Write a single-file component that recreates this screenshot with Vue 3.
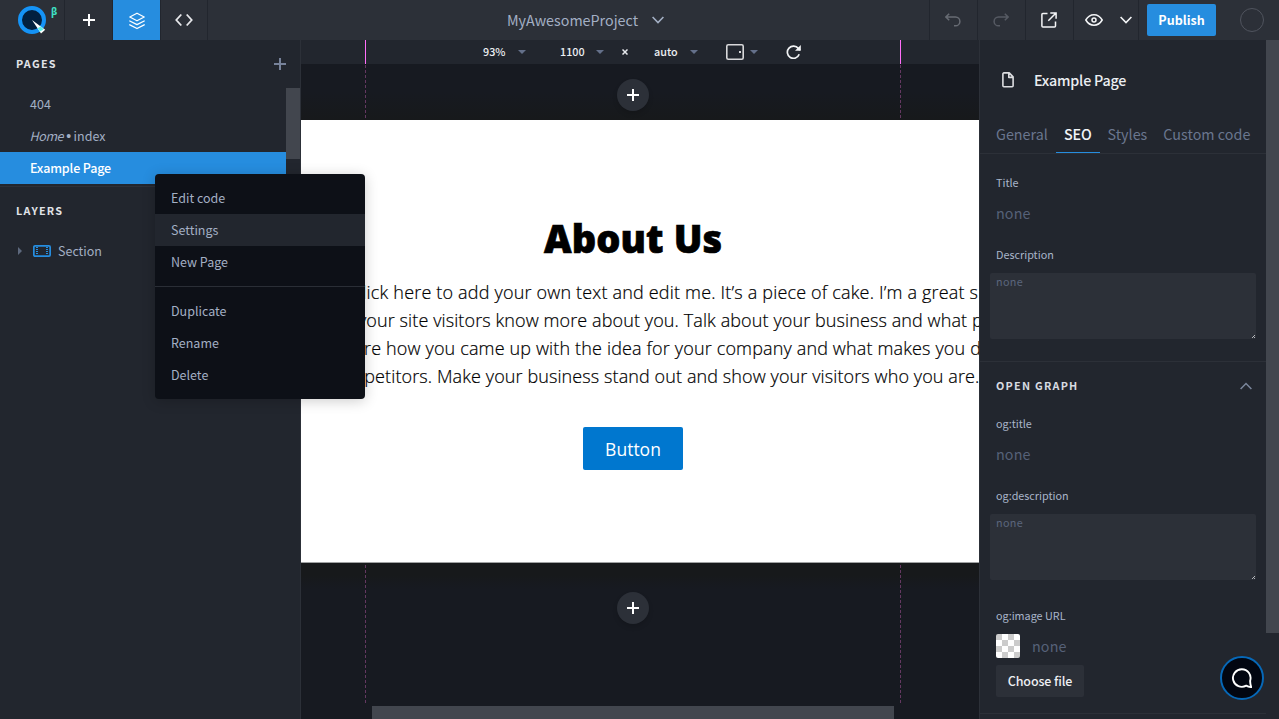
<script setup>
const pages = [
  { name: '404' },
  { name: 'index', home: true },
  { name: 'Example Page', active: true },
]
const menu = [
  ['Edit code', 'Settings', 'New Page'],
  ['Duplicate', 'Rename', 'Delete'],
]
const tabs = ['General', 'SEO', 'Styles', 'Custom code']
</script>

<template>
  <div class="app">
    <header class="topbar">
      <div class="cell logo">
        <svg width="64" height="40" viewBox="0 0 64 40">
          <circle cx="32" cy="20" r="12" fill="#02203f" stroke="#1593f6" stroke-width="4" />
          <path d="M32 20 45.200 29.800 41 33.600Z" fill="#fff" />
          <path d="M37.800 28 41 26.600 43.600 29.400 39.900 31.400Z" fill="#5ff0e8" />
        </svg>
        <span class="beta">β</span>
      </div>
      <div class="cell w48">
        <svg width="12" height="12" viewBox="0 0 12 12"><path d="M6 0v12M0 6h12" stroke="#fff" stroke-width="2" /></svg>
      </div>
      <div class="cell w48 on">
        <svg width="18" height="18" viewBox="0 0 18 18" fill="none" stroke="#fff" stroke-width="1.3" stroke-linejoin="round" stroke-linecap="round"><path d="M9 1.2 16.2 5 9 8.8 1.8 5ZM1.8 9 9 12.7 16.2 9M1.8 12.8 9 16.5l7.200-3.700" /></svg>
      </div>
      <div class="cell w47">
        <svg width="18" height="14" viewBox="0 0 18 14" fill="none" stroke="#e8e9ec" stroke-width="1.800"><path d="M6.300 1.500 1.300 7l5 5.500M11.700 1.500l5 5.500-5 5.500" /></svg>
      </div>
      <div class="project">
        <span>MyAwesomeProject</span>
        <svg width="12" height="8" viewBox="0 0 12 8" fill="none" stroke="#a3afc4" stroke-width="1.600"><path d="M.6 1 6 6.500 11.400 1" /></svg>
      </div>
      <div class="cell w48 left">
        <svg width="16" height="14" viewBox="0 0 16 14" fill="none" stroke="#676b73" stroke-width="1.500"><path d="M4.200.7.9 4l3.300 3.300M1 4h9.500a4.400 4.400 0 0 1 0 8.800H9" /></svg>
      </div>
      <div class="cell w48 nudge">
        <svg width="16" height="14" viewBox="0 0 16 14" fill="none" stroke="#565a63" stroke-width="1.500"><path d="M11.800.7 15.100 4l-3.300 3.300M15 4H5.500a4.400 4.400 0 0 0 0 8.800H7" /></svg>
      </div>
      <div class="cell w48 nudge">
        <svg width="16" height="16" viewBox="0 0 16 16" fill="none" stroke="#f4f5f7" stroke-width="1.500"><path d="M6.500 1.500H1.900a1 1 0 0 0-1 1V14a1 1 0 0 0 1 1h11.600a1 1 0 0 0 1-1V9.500M9.300.9h5.800v5.800M15 1 7.300 8.700" /></svg>
      </div>
      <div class="cell preview">
        <svg width="18" height="12" viewBox="0 0 18 12" fill="none" stroke="#f4f5f7" stroke-width="1.500"><path d="M.8 6C2.800 2.600 5.600.8 9 .8S15.200 2.600 17.200 6C15.200 9.400 12.400 11.200 9 11.200S2.800 9.400.8 6Z" /><circle cx="9" cy="6" r="2" /></svg>
        <svg width="12" height="8" viewBox="0 0 12 8" fill="none" stroke="#f4f5f7" stroke-width="1.600"><path d="M.6 1 6 6.500 11.400 1" /></svg>
      </div>
      <button class="publish">Publish</button>
      <span class="avatar"></span>
    </header>

    <div class="body">
      <aside class="left-panel">
        <div class="head">
          <span>PAGES</span>
          <svg width="12" height="12" viewBox="0 0 12 12"><path d="M6 0v12M0 6h12" stroke="#77829a" stroke-width="2" /></svg>
        </div>
        <div class="pages">
          <ul>
            <li v-for="p in pages" :key="p.name" :class="{ active: p.active }">
              <template v-if="p.home"><i>Home</i><span class="dot">•</span></template><span>{{ p.name }}</span>
            </li>
          </ul>
          <div class="track"><div class="thumb"></div></div>
        </div>
        <div class="head"><span>LAYERS</span></div>
        <div class="layer">
          <svg class="tri" width="4" height="8" viewBox="0 0 4 8"><path d="M0 0 4 4 0 8Z" fill="#5d687d" /></svg>
          <svg width="18" height="12" viewBox="0 0 18 12" fill="none" stroke="#268ddf"><rect x=".85" y=".85" width="16.300" height="10.300" rx="1.200" stroke-width="1.700" /><path d="M4 2v8M14 2v8" stroke-width="2" stroke-dasharray="1 1" /></svg>
          <span>Section</span>
        </div>
      </aside>

      <main class="stage">
        <div class="ruler">
          <span class="val zoom">93%</span><i class="caret"></i>
          <span class="val width">1100</span><i class="caret"></i>
          <svg class="times" width="6" height="6" viewBox="0 0 6 6"><path d="M.5.5l5 5M5.500.5l-5 5" stroke="#e6e8ec" stroke-width="1.500" /></svg>
          <span class="val height">auto</span><i class="caret"></i>
          <svg class="device" width="18" height="16" viewBox="0 0 18 16" fill="none"><rect x=".8" y=".8" width="16.400" height="14.400" rx="1.500" stroke="#d8d8da" stroke-width="1.600" /><path d="M13 8h2" stroke="#d8d8da" stroke-width="2" /></svg>
          <i class="caret near"></i>
          <svg class="reload" width="16" height="14" viewBox="0 0 16 14" fill="none" stroke="#f2f3f5"><path d="M13.200 9.300A6.100 6.100 0 1 1 12.400 3.600L14 5.200" stroke-width="1.700" /><path d="M14.800 0v5.800H9Z" fill="#f2f3f5" stroke="none" /></svg>
        </div>
        <div class="canvas">
          <div class="band top"><span class="add"><svg width="12" height="12" viewBox="0 0 12 12"><path d="M6 0v12M0 6h12" stroke="#fff" stroke-width="2" /></svg></span></div>
          <section class="page">
            <h1>About Us</h1>
            <div class="copy">
              <p class="l1">Click here to add your own text and edit me. It’s a piece of cake. I’m a great s</p>
              <p class="l2">your site visitors know more about you. Talk about your business and what p</p>
              <p class="l3">share how you came up with the idea for your company and what makes you d</p>
              <p class="l4">competitors. Make your business stand out and show your visitors who you are.</p>
            </div>
            <a class="button">Button</a>
          </section>
          <div class="band bottom"><span class="add"><svg width="12" height="12" viewBox="0 0 12 12"><path d="M6 0v12M0 6h12" stroke="#fff" stroke-width="2" /></svg></span></div>
          <div class="hscroll"><div></div></div>
        </div>
        <span class="guide ga"></span>
        <span class="guide gb"></span>
      </main>

      <aside class="right-panel">
        <div class="scroll">
          <div class="title">
            <svg width="12" height="16" viewBox="0 0 12 16" fill="none" stroke="#dcdde0" stroke-width="1.600" stroke-linejoin="round"><path d="M7.200.9H1.900a1 1 0 0 0-1 1v11.800a1 1 0 0 0 1 1h8.200a1 1 0 0 0 1-1V4.900ZM6.800 1v4.400H11" /></svg>
            <span>Example Page</span>
          </div>
          <nav class="tabs">
            <span v-for="t in tabs" :key="t" :class="{ sel: t === 'SEO' }">{{ t }}</span>
          </nav>
          <div class="fields">
            <label class="f1">Title</label>
            <div class="input">none</div>
            <label class="f2">Description</label>
            <div class="area">none<svg width="3" height="3" viewBox="0 0 3 3"><path d="M0 3 3 0M2 3l1-1" stroke="#d6d8db" stroke-width=".8" /></svg></div>
          </div>
          <div class="group">
            <div class="ghead"><span>OPEN GRAPH</span><svg width="12" height="8" viewBox="0 0 12 8" fill="none" stroke="#7b869c" stroke-width="1.500"><path d="M.6 7 6 1.500 11.400 7" /></svg></div>
            <label>og:title</label>
            <div class="input">none</div>
            <label class="f2">og:description</label>
            <div class="area">none<svg width="3" height="3" viewBox="0 0 3 3"><path d="M0 3 3 0M2 3l1-1" stroke="#d6d8db" stroke-width=".8" /></svg></div>
            <label class="f3">og:image URL</label>
            <div class="image"><i></i><span>none</span></div>
            <button class="choose">Choose file</button>
          </div>
        </div>
        <div class="vscroll"><div></div></div>
      </aside>
    </div>

    <div class="menu">
      <div v-for="(g, i) in menu" :key="i" class="mgroup">
        <div v-for="m in g" :key="m" class="mitem" :class="{ hover: m === 'Settings' }">{{ m }}</div>
      </div>
    </div>
    <div class="chat">
      <svg width="20" height="20" viewBox="0 0 20 20" fill="none" stroke="#fff" stroke-width="1.900" stroke-linejoin="round"><path d="M14.200 17.600A8.800 8.800 0 1 1 18.200 12.500c-.2 2 .2 4 1 6.600-1.900-.1-3.500-.6-5-1.500Z" /></svg>
    </div>
  </div>
</template>

<style>
body { background: #171a21; overflow: hidden; }
</style>
<style scoped>
* { box-sizing: border-box; }
.app { position: relative; width: 1279px; height: 719px; overflow: hidden; display: flex; flex-direction: column; background: #22262e; color: #a3afc4; font: 12.5px/20px "Noto Sans CJK SC", "Noto Sans", sans-serif; }
svg { display: block; flex: none; }
p, h1, ul { margin: 0; padding: 0; list-style: none; }
button { border: 0; font-family: inherit; color: #fff; padding: 0; }

.topbar { height: 40px; flex: none; display: flex; background: #2c3038; }
.cell { display: flex; align-items: center; justify-content: center; border-right: 1px solid #22262e; }
.logo { position: relative; width: 65px; }
.beta { position: absolute; left: 51px; top: 1px; font: 700 10px/20px "Noto Sans", sans-serif; color: #3fe0c5; }
.w48 { width: 48px; }
.w47 { width: 47px; }
.on { background: #268ddf; }
.on svg { margin-top: 1px; }
.w48.left { width: 49px; border-left: 1px solid #22262e; padding-right: 2px; }
.nudge { padding-right: 2px; }
.project { flex: 1; display: flex; align-items: center; padding-left: 299px; gap: 14px; font-size: 14.3px; }
.preview { width: 65px; gap: 17px; padding-left: 5px; }
.publish { width: 69px; height: 32px; margin: 4px 0 0 8px; padding-bottom: 1px; background: #268ddf; border-radius: 2px; font-size: 12.5px; font-weight: 700; }
.avatar { width: 24px; height: 24px; margin: 8px 15px 0 24px; border: 1px solid #50545e; border-radius: 50%; }

.body { flex: 1; display: flex; min-height: 0; }
.left-panel { width: 301px; border-right: 1px solid #2c3038; }
.head { height: 48px; display: flex; align-items: center; justify-content: space-between; padding: 0 14px 0 16px; font-size: 10.8px; font-weight: 700; letter-spacing: 1.25px; color: #e1e3e8; }
.head span { margin-top: -2px; }
.pages { display: flex; height: 99px; border-bottom: 1px solid #2c3038; }
.pages ul { flex: 1; }
.pages li { height: 32px; display: flex; align-items: center; padding-left: 30px; }
.pages i { letter-spacing: -.4px; margin-left: -.5px; }
.dot { margin: 0 2.500px 0 3px; width: 5px; display: flex; justify-content: center; font: 14px/20px "Liberation Sans", sans-serif; }
.pages li.active { background: #268ddf; color: #fff; font-weight: 500; letter-spacing: -.14px; }
.track { width: 14px; }
.thumb { height: 71px; background: #42464e; }
.layer { height: 32px; display: flex; align-items: center; padding-left: 18px; }
.tri { margin-right: 11px; }
.layer span { margin-left: 7px; }

.stage { position: relative; flex: 1; min-width: 0; overflow: hidden; display: flex; flex-direction: column; background: #171a21; }
.ruler { height: 24px; flex: none; background: #22262e; display: flex; align-items: center; color: #eceef2; font-size: 10.8px; font-weight: 500; }
.val { margin-top: -2px; }
.caret { border: 4px solid transparent; border-top-color: #64708a; border-bottom: 0; margin-left: 13px; }
.zoom { margin-left: 182px; width: 22px; }
.width { margin-left: 34px; width: 24px; margin-right: -1px; }
.height { margin-left: 26px; width: 23px; }
.times { margin-left: 18px; }
.device { margin-left: 28px; }
.near { margin-left: 6px; }
.reload { margin-left: 28px; }
.canvas { flex: 1; display: flex; flex-direction: column; }
.band { display: flex; padding-left: 316px; }
.band.top { height: 56px; padding-top: 15px; background: linear-gradient(#171a21 50%, #17191b); }
.band.bottom { height: 143px; padding-top: 29px; background: linear-gradient(#17191b 12px, #171a21 26px); }
.add { width: 32px; height: 32px; border-radius: 50%; background: #2c3038; display: grid; place-items: center; box-shadow: 0 3px 5px #0002; }
.page { height: 443px; background: #fff; border-bottom: 1px solid #a0a2a3; color: #000; display: flex; flex-direction: column; align-items: flex-start; }
h1 { margin: 92px 0 0 243px; font: 800 38px/52px "Open Sans", sans-serif; letter-spacing: .1px; white-space: nowrap; -webkit-text-stroke: .7px #000; }
.copy { margin-top: 14px; font: 300 18px/28px "Open Sans", sans-serif; white-space: nowrap; width: 678px; overflow: hidden; -webkit-text-stroke: .2px #000; }
.l1 { margin-left: 50px; letter-spacing: .18px; }
.l2 { margin-left: 57px; letter-spacing: .1px; }
.l3 { margin-left: 34px; letter-spacing: .15px; }
.l4 { margin-left: 28px; letter-spacing: .1px; }
.button { margin: 37px 0 0 282px; width: 100px; height: 43px; padding-top: 1px; display: grid; place-items: center; background: #0077cf; color: #fff; border-radius: 2px; font: 400 17.500px/26px "Open Sans", sans-serif; }
.hscroll { flex: 1; padding-left: 71px; }
.hscroll div { width: 522px; height: 13px; background: #42464e; }
.guide { position: absolute; top: 0; width: 1px; height: 665px; background: linear-gradient(#ff6ef9 24px, transparent 24px), repeating-linear-gradient(#643861 0 3px, transparent 3px 5px); clip-path: polygon(0 0, 100% 0, 100% 80px, 0 80px, 0 523px, 100% 523px, 100% 100%, 0 100%); }
.ga { left: 64px; }
.gb { left: 599px; }

.right-panel { width: 300px; display: flex; border-left: 1px solid #2c3038; }
.scroll { width: 286px; }
.vscroll { width: 13px; }
.vscroll div { height: 593px; background: #42464e; }
.title { height: 80px; display: flex; align-items: center; padding-left: 22px; gap: 20px; font-size: 14.3px; font-weight: 500; letter-spacing: -.2px; color: #eceef2; }
.tabs { height: 34px; display: flex; padding-left: 8px; border-bottom: 1px solid #2c3038; font-size: 14.3px; line-height: 27px; letter-spacing: .03px; color: #6a768e; }
.tabs span { padding: 0 8px; white-space: nowrap; height: 33px; }
.tabs .sel { color: #f2f4f7; font-weight: 500; letter-spacing: -.15px; border-bottom: 1px solid #268ddf; }
label { display: block; height: 20px; padding-left: 16px; font-size: 10.8px; line-height: 18px; color: #a9b5ca; }
.f1 { margin-top: 19px; }
.input { height: 32px; margin-top: 5px; padding-left: 16px; font-size: 14.3px; line-height: 30px; letter-spacing: .15px; color: #566178; }
.f2 { margin-top: 15px; }
.area { position: relative; width: 266px; height: 66px; margin: 8px 0 0 10px; padding: 0 6px; background: #2c3038; border-radius: 2px; font-size: 10.8px; line-height: 17px; letter-spacing: .35px; color: #5b667d; }
.area svg { position: absolute; right: 1px; bottom: 1px; }
.group { margin-top: 22px; border-top: 1px solid #2c3038; border-bottom: 1px solid #2c3038; height: 353px; }
.ghead { height: 52px; display: flex; align-items: center; justify-content: space-between; padding: 0 14px 3px 16px; font-size: 10.8px; font-weight: 700; letter-spacing: 1.25px; color: #d8dbe1; }
.ghead span { margin-top: -3px; }
.ghead svg { margin-top: -2px; }
.f3 { margin-top: 26px; }
.image { display: flex; align-items: center; gap: 12px; margin: 8px 0 0 16px; height: 24px; font-size: 14.3px; letter-spacing: .15px; color: #566178; }
.image i { width: 24px; height: 24px; border-radius: 2px; background: repeating-conic-gradient(#ccc 0 25%, #fff 0 50%) 6px 0 / 12px 12px; }
.choose { margin: 7px 0 0 16px; width: 88px; height: 32px; padding-bottom: 2px; background: #2c3038; border-radius: 2px; font-size: 12.5px; font-weight: 500; letter-spacing: -.12px; color: #eceef2; }

.menu { position: absolute; left: 155px; top: 174px; width: 210px; height: 225px; background: #0d1017; border-radius: 4px; box-shadow: 0 2px 14px #0003; }
.mgroup { padding: 8px 0; }
.mgroup + .mgroup { border-top: 1px solid #2a2e36; }
.mitem { height: 32px; line-height: 32px; padding-left: 16px; }
.hover { background: #22262e; }
.chat { position: absolute; left: 1220px; top: 656px; width: 44px; height: 44px; border: 2px solid #0668b8; border-radius: 50%; background: #020611; display: grid; place-items: center; }
</style>
